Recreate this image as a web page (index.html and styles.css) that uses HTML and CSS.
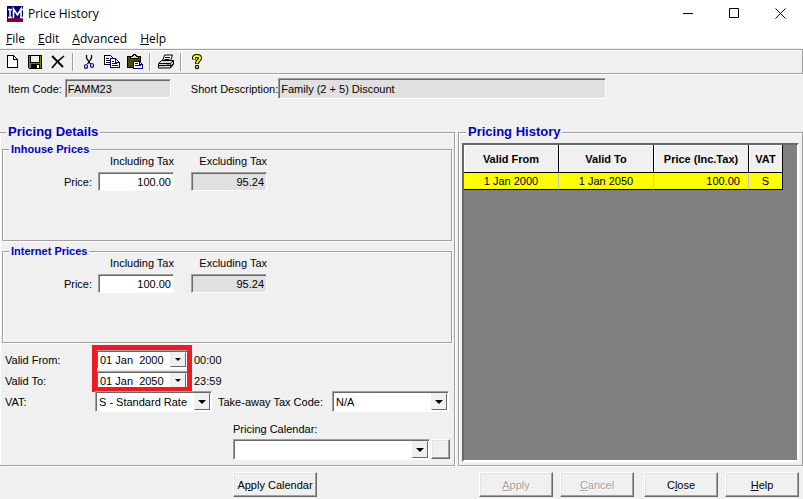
FILE: index.html
```html
<!DOCTYPE html>
<html lang="en">
<head>
<meta charset="UTF-8">
<meta name="viewport" content="width=device-width, initial-scale=1.0">
<title>Price History</title>
<link rel="stylesheet" href="styles.css">
</head>
<body>
<div class="window">
    <header class="title-bar">
        <svg class="logo" width="16" height="16" viewBox="0 0 16 16" aria-hidden="true">
            <rect width="16" height="16" fill="#00007b"/>
            <rect y="12" width="16" height="4" fill="#7b0030"/>
            <path d="M1 3.5h4M1 11.5h4M3 3v9" stroke="#fff" stroke-width="1.5" fill="none"/>
            <path d="M6.500 12V3l4 6L14 3v9M13 11.500h3M13 3.500h3" stroke="#fff" stroke-width="1.6" fill="none"/>
        </svg>
        <h1>Price History</h1>
        <div class="window-buttons">
            <button type="button" aria-label="Minimize"><svg width="11" height="11" viewBox="0 0 11 11"><path d="M0 5.5h10" stroke="#000"/></svg></button>
            <button type="button" aria-label="Maximize"><svg width="11" height="11" viewBox="0 0 11 11"><path d="M.5 .5h9v9h-9z" stroke="#000" fill="none"/></svg></button>
            <button type="button" aria-label="Close window"><svg width="11" height="11" viewBox="0 0 11 11"><path d="M.5 .5l10 10M10.5 .5l-10 10" stroke="#000"/></svg></button>
        </div>
    </header>

    <nav class="menu-bar">
        <a href="#"><u>F</u>ile</a>
        <a href="#"><u>E</u>dit</a>
        <a href="#"><u>A</u>dvanced</a>
        <a href="#"><u>H</u>elp</a>
    </nav>

    <div class="toolbar">
        <button type="button" aria-label="New"><svg width="16" height="16" viewBox="0 0 16 16" shape-rendering="crispEdges"><path d="M3.5 1.5h6l4 4v8h-10z" fill="#fff" stroke="#000"/><path d="M9.5 1.5v4h4" fill="none" stroke="#000"/></svg></button>
        <button type="button" aria-label="Save"><svg width="16" height="16" viewBox="0 0 16 16" shape-rendering="crispEdges"><path d="M1.5 1.5h13v13h-12l-1-1z" fill="#808000" stroke="#000"/><path d="M4 2h8v6H4z" fill="#efefef"/><path d="M3.5 2v6.5h9V2" fill="none" stroke="#000"/><path d="M4 10h9v4H4z"/><path d="M10 11h2v3h-2z" fill="#fff"/></svg></button>
        <button type="button" aria-label="Delete"><svg width="16" height="16" viewBox="0 0 16 16"><path d="M2 2l11 11" stroke="#000" stroke-width="2"/><path d="M14 2L7 8l-5 6" stroke="#000" stroke-width="1.6" fill="none"/></svg></button>
        <span class="divider"></span>
        <button type="button" aria-label="Cut"><svg width="16" height="16" viewBox="0 0 16 16"><path d="M5.500 1v3l4 6M10.500 1v3l-4 6" fill="none" stroke="#000" stroke-width="1.3"/><ellipse cx="5" cy="12.5" rx="1.5" ry="2" fill="none" stroke="#000080" stroke-width="1.2"/><ellipse cx="11" cy="11.5" rx="1.5" ry="2" fill="none" stroke="#000080" stroke-width="1.2"/></svg></button>
        <button type="button" aria-label="Copy"><svg width="16" height="16" viewBox="0 0 16 16" shape-rendering="crispEdges"><path d="M.5 1.5h6l3 3v6h-9z" fill="#fff" stroke="#000"/><path d="M2 4.5h3M2 6.5h5M2 8.5h5" stroke="#000"/><path d="M6.5 4.5h5l4 4v5h-9z" fill="#fff" stroke="#000080"/><path d="M11.5 4.5v4h4M8 7.5h2M8 9.5h5M8 11.5h6" fill="none" stroke="#000080"/></svg></button>
        <button type="button" aria-label="Paste"><svg width="17" height="16" viewBox="0 0 17 16" shape-rendering="crispEdges"><path d="M1.5 2.5h13v11h-13z" fill="#4a4a10" stroke="#000"/><path d="M4.5 4.5v-2h2l1-2h2l1 2h2v2z" fill="#ffff00" stroke="#000"/><path d="M7.5 7.5h6l3 3v4h-9z" fill="#fff" stroke="#000080"/><path d="M9 9.5h3M9 11.5h6M13.5 8v2.5h3" fill="none" stroke="#000080"/></svg></button>
        <span class="divider"></span>
        <button type="button" aria-label="Print"><svg width="16" height="16" viewBox="0 0 16 16"><path d="M4.5 7l2-6h8l-2 6z" fill="#fff" stroke="#000"/><path d="M7 3.5h5M6.5 5.5h5" stroke="#000"/><path d="M.5 9.5l3-3h12v4l-3 3.5h-12z" fill="#d8d8d8" stroke="#000"/><path d="M1 9.5h11.5v4M12.5 9.5l3-3M1 11.5h11M13 12l2-2" fill="none" stroke="#000"/><path d="M9 10.5h2" stroke="#808000"/></svg></button>
        <span class="divider"></span>
        <button type="button" aria-label="Help topics"><svg width="16" height="16" viewBox="0 0 16 16"><path d="M5 5.5V4q0-2 3-2t3 2q0 1.500-1.500 2.500T8 10" fill="none" stroke="#000" stroke-width="4"/><circle cx="8" cy="13" r="2.2"/><path d="M5 5V4q0-2 3-2t3 2q0 1.500-1.500 2.500T8 9.500" fill="none" stroke="#ffff00" stroke-width="2"/><circle cx="8" cy="13" r="1.1" fill="#ffff00"/></svg></button>
    </div>

    <div class="item-row">
        <label for="itemCode">Item Code:</label>
        <input type="text" id="itemCode" class="field item-code" value="FAMM23" readonly>
        <label for="shortDescription">Short Description:</label>
        <input type="text" id="shortDescription" class="field description" value="Family (2 + 5) Discount" readonly>
    </div>

    <main class="panels">
        <fieldset class="panel details">
            <legend>Pricing Details</legend>
            <fieldset class="prices">
                <legend>Inhouse Prices</legend>
                <div class="price-grid">
                    <span></span>
                    <span>Including Tax</span>
                    <span>Excluding Tax</span>
                    <label for="inhouseInc">Price:</label>
                    <input type="text" id="inhouseInc" class="field" value="100.00">
                    <input type="text" class="field" value="95.24" aria-label="Inhouse price excluding tax" readonly>
                </div>
            </fieldset>
            <fieldset class="prices">
                <legend>Internet Prices</legend>
                <div class="price-grid">
                    <span></span>
                    <span>Including Tax</span>
                    <span>Excluding Tax</span>
                    <label for="internetInc">Price:</label>
                    <input type="text" id="internetInc" class="field" value="100.00">
                    <input type="text" class="field" value="95.24" aria-label="Internet price excluding tax" readonly>
                </div>
            </fieldset>

            <div class="dates">
                <label for="validFrom">Valid From:</label>
                <div class="combo date"><select id="validFrom"><option>01 Jan&nbsp; 2000</option></select><span class="arrow"></span></div>
                <span>00:00</span>
                <label for="validTo">Valid To:</label>
                <div class="combo date"><select id="validTo"><option>01 Jan&nbsp; 2050</option></select><span class="arrow"></span></div>
                <span>23:59</span>
                <div class="highlight"></div>
            </div>

            <div class="tax-row">
                <label for="vat">VAT:</label>
                <div class="combo"><select id="vat"><option>S - Standard Rate</option></select><span class="arrow"></span></div>
                <label for="takeaway">Take-away Tax Code:</label>
                <div class="combo"><select id="takeaway"><option>N/A</option></select><span class="arrow"></span></div>
            </div>

            <div class="calendar">
                <label for="calendar">Pricing Calendar:</label>
                <div class="calendar-row">
                    <div class="combo"><select id="calendar"><option></option></select><span class="arrow"></span></div>
                    <button type="button" class="btn browse" aria-label="Browse calendars"></button>
                </div>
            </div>
        </fieldset>

        <fieldset class="panel history">
            <legend>Pricing History</legend>
            <div class="table-area">
                <table>
                    <thead>
                        <tr><th class="wide">Valid From</th><th class="wide">Valid To</th><th class="wide">Price (Inc.Tax)</th><th class="narrow">VAT</th></tr>
                    </thead>
                    <tbody>
                        <tr><td>1 Jan 2000</td><td>1 Jan 2050</td><td class="amount">100.00</td><td>S</td></tr>
                    </tbody>
                </table>
            </div>
        </fieldset>
    </main>

    <footer class="actions">
        <button type="button" class="btn apply-calendar">A<u>p</u>ply Calendar</button>
        <div class="action-group">
            <button type="button" class="btn" disabled><u>A</u>pply</button>
            <button type="button" class="btn" disabled><u>C</u>ancel</button>
        </div>
        <div class="action-group">
            <button type="button" class="btn">C<u>l</u>ose</button>
            <button type="button" class="btn"><u>H</u>elp</button>
        </div>
    </footer>
</div>
</body>
</html>
```

FILE: styles.css
```css
* {
    box-sizing: border-box;
}

body {
    margin: 0;
    background-color: #f0f0f0;
    color: #000;
    font-family: "Liberation Sans", Arial, sans-serif;
    font-size: 11px;
    line-height: 14px;
}

button,
input,
select {
    font: inherit;
    color: inherit;
    margin: 0;
}

.window {
    display: flex;
    flex-direction: column;
    min-height: 100vh;
}

/* Title and menu */
.title-bar {
    display: flex;
    align-items: center;
    height: 27px;
    padding-left: 7px;
    background-color: #fff;
}

.title-bar h1 {
    margin: 0 auto 0 5px;
    font-family: "Open Sans", "Noto Sans", sans-serif;
    font-size: 12px;
    font-weight: normal;
}

.window-buttons {
    display: flex;
}

.window-buttons button {
    display: flex;
    align-items: center;
    justify-content: center;
    width: 46px;
    height: 27px;
    padding: 0;
    border: none;
    background: none;
}

.menu-bar {
    display: flex;
    gap: 13px;
    height: 21px;
    padding: 5px 6px 0;
    background-color: #fff;
    font-family: "Open Sans", "Noto Sans", sans-serif;
    font-size: 12px;
}

.menu-bar a {
    color: inherit;
    text-decoration: none;
}

.toolbar {
    display: flex;
    align-items: center;
    height: 25px;
    margin-top: 1px;
    border: 1px solid #a0a0a0;
    border-left: none;
    box-shadow: inset 0 1px #fff, 0 1px #fff;
}

.toolbar button {
    display: flex;
    align-items: center;
    justify-content: center;
    width: 23px;
    height: 22px;
    padding: 0;
    border: none;
    background: none;
}

.divider {
    width: 2px;
    height: 18px;
    margin: 0 3px;
    border-left: 1px solid #a0a0a0;
    background-color: #fff;
}

/* Item */
.item-row {
    display: flex;
    align-items: center;
    padding: 4px 8px 0;
}

.field {
    height: 19px;
    padding: 0 2px;
    border: 1px solid;
    border-color: #a0a0a0 #fff #fff #a0a0a0;
    border-radius: 0;
    background-color: #fff;
    box-shadow: inset 1px 1px #696969;
    outline: none;
}

.field[readonly] {
    background-color: #e0e0e0;
}

.item-code {
    width: 106px;
    margin: 0 20px 0 3px;
}

.description {
    flex: 0 1 328px;
    height: 21px;
}

/* Panels */
.panels {
    display: flex;
    flex: 1;
    gap: 3px;
    margin-top: 26px;
}

fieldset {
    min-width: 0;
    margin: 0;
    padding: 0;
    border: 1px solid #a0a0a0;
    box-shadow: inset 1px 1px #fff, 1px 1px #fff;
}

legend {
    margin-left: 6px;
    padding: 0 2px;
    background-color: #f0f0f0;
    color: #0000bf;
    font-size: 11px;
    font-weight: bold;
    line-height: 12px;
}

.panel > legend {
    margin-left: 4px;
    font-size: 13px;
    line-height: 14px;
}

.details {
    flex: 0 0 455px;
    padding: 4px 2px 0;
    border-left: none;
}

.prices {
    height: 98px;
    margin-bottom: 4px;
}

.price-grid {
    display: grid;
    grid-template-columns: 78px 76px 76px;
    column-gap: 17px;
    row-gap: 5px;
    align-items: center;
    justify-items: end;
    line-height: 12px;
}

.price-grid label {
    margin-right: -11px;
}

.price-grid .field {
    width: 76px;
    text-align: right;
}

.dates {
    position: relative;
    display: grid;
    grid-template-columns: 85px 92px auto;
    column-gap: 6px;
    row-gap: 2px;
    align-items: center;
    justify-content: start;
    padding: 3px 3px 0;
}

.highlight {
    position: absolute;
    inset: -2px auto -2px 90px;
    width: 100px;
    border: 5px solid #ed1c24;
    pointer-events: none;
}

.combo {
    position: relative;
    height: 21px;
}

.combo select {
    display: block;
    width: 100%;
    height: 100%;
    padding: 0 20px 0 3px;
    appearance: none;
    border: 1px solid;
    border-color: #a0a0a0 #fff #fff #a0a0a0;
    border-radius: 0;
    background-color: #fff;
    box-shadow: inset 1px 1px #696969;
}

.arrow {
    position: absolute;
    top: 2px;
    right: 2px;
    bottom: 2px;
    width: 16px;
    border: 1px solid;
    border-color: #f0f0f0 #696969 #696969 #f0f0f0;
    background-color: #f0f0f0;
    pointer-events: none;
}

.arrow::after {
    content: "";
    position: absolute;
    top: 6px;
    left: 3px;
    border: 4px solid transparent;
    border-top-color: #000;
    border-bottom: none;
}

.date {
    height: 19px;
}

.date .arrow::after {
    top: 5px;
    left: 4px;
    border-width: 3px 3px 0;
}

.tax-row {
    display: grid;
    grid-template-columns: 90px 117px 120px 117px;
    align-items: center;
    margin-top: 1px;
    padding-left: 3px;
}

.tax-row label + .combo + label {
    padding-left: 6px;
}

.calendar {
    width: 217px;
    margin: 10px 2px 5px auto;
}

.calendar label {
    display: block;
    margin-bottom: 3px;
}

.calendar-row {
    display: flex;
    gap: 1px;
}

.calendar-row .combo {
    flex: 1;
}

.history {
    flex: 1;
    display: flex;
    padding: 4px 3px 3px;
}

.table-area {
    flex: 1;
    border: 2px solid;
    border-color: #696969 #fff #fff #696969;
    background-color: #808080;
}

table {
    border-collapse: separate;
    border-spacing: 0;
    table-layout: fixed;
}

th {
    height: 28px;
    padding: 0;
    border-right: 1px solid #000;
    border-bottom: 1px solid #000;
    background-color: #f0f0f0;
    box-shadow: inset 1px 1px #fff;
}

.wide {
    width: 95px;
}

.narrow {
    width: 34px;
}

td {
    height: 17px;
    padding: 0;
    border-right: 1px solid #c0c0c0;
    border-bottom: 1px solid #000;
    background-color: #ffff00;
    text-align: center;
}

td:last-child {
    border-right-color: #000;
}

.amount {
    padding-right: 8px;
    text-align: right;
}

/* Buttons */
.btn {
    width: 74px;
    height: 25px;
    padding: 0;
    border: 1px solid;
    border-color: #fff #696969 #696969 #fff;
    border-radius: 0;
    background-color: #f0f0f0;
    box-shadow: inset -1px -1px #a0a0a0, inset 1px 1px #e3e3e3;
}

.btn:disabled {
    color: #a0a0a0;
    text-shadow: 1px 1px #fff;
}

.browse {
    width: 19px;
    height: 20px;
}

.apply-calendar {
    width: 84px;
    margin-right: auto;
}

.actions {
    display: flex;
    gap: 10px;
    padding: 6px 4px 2px 233px;
}

.action-group {
    display: flex;
    gap: 7px;
}
```
